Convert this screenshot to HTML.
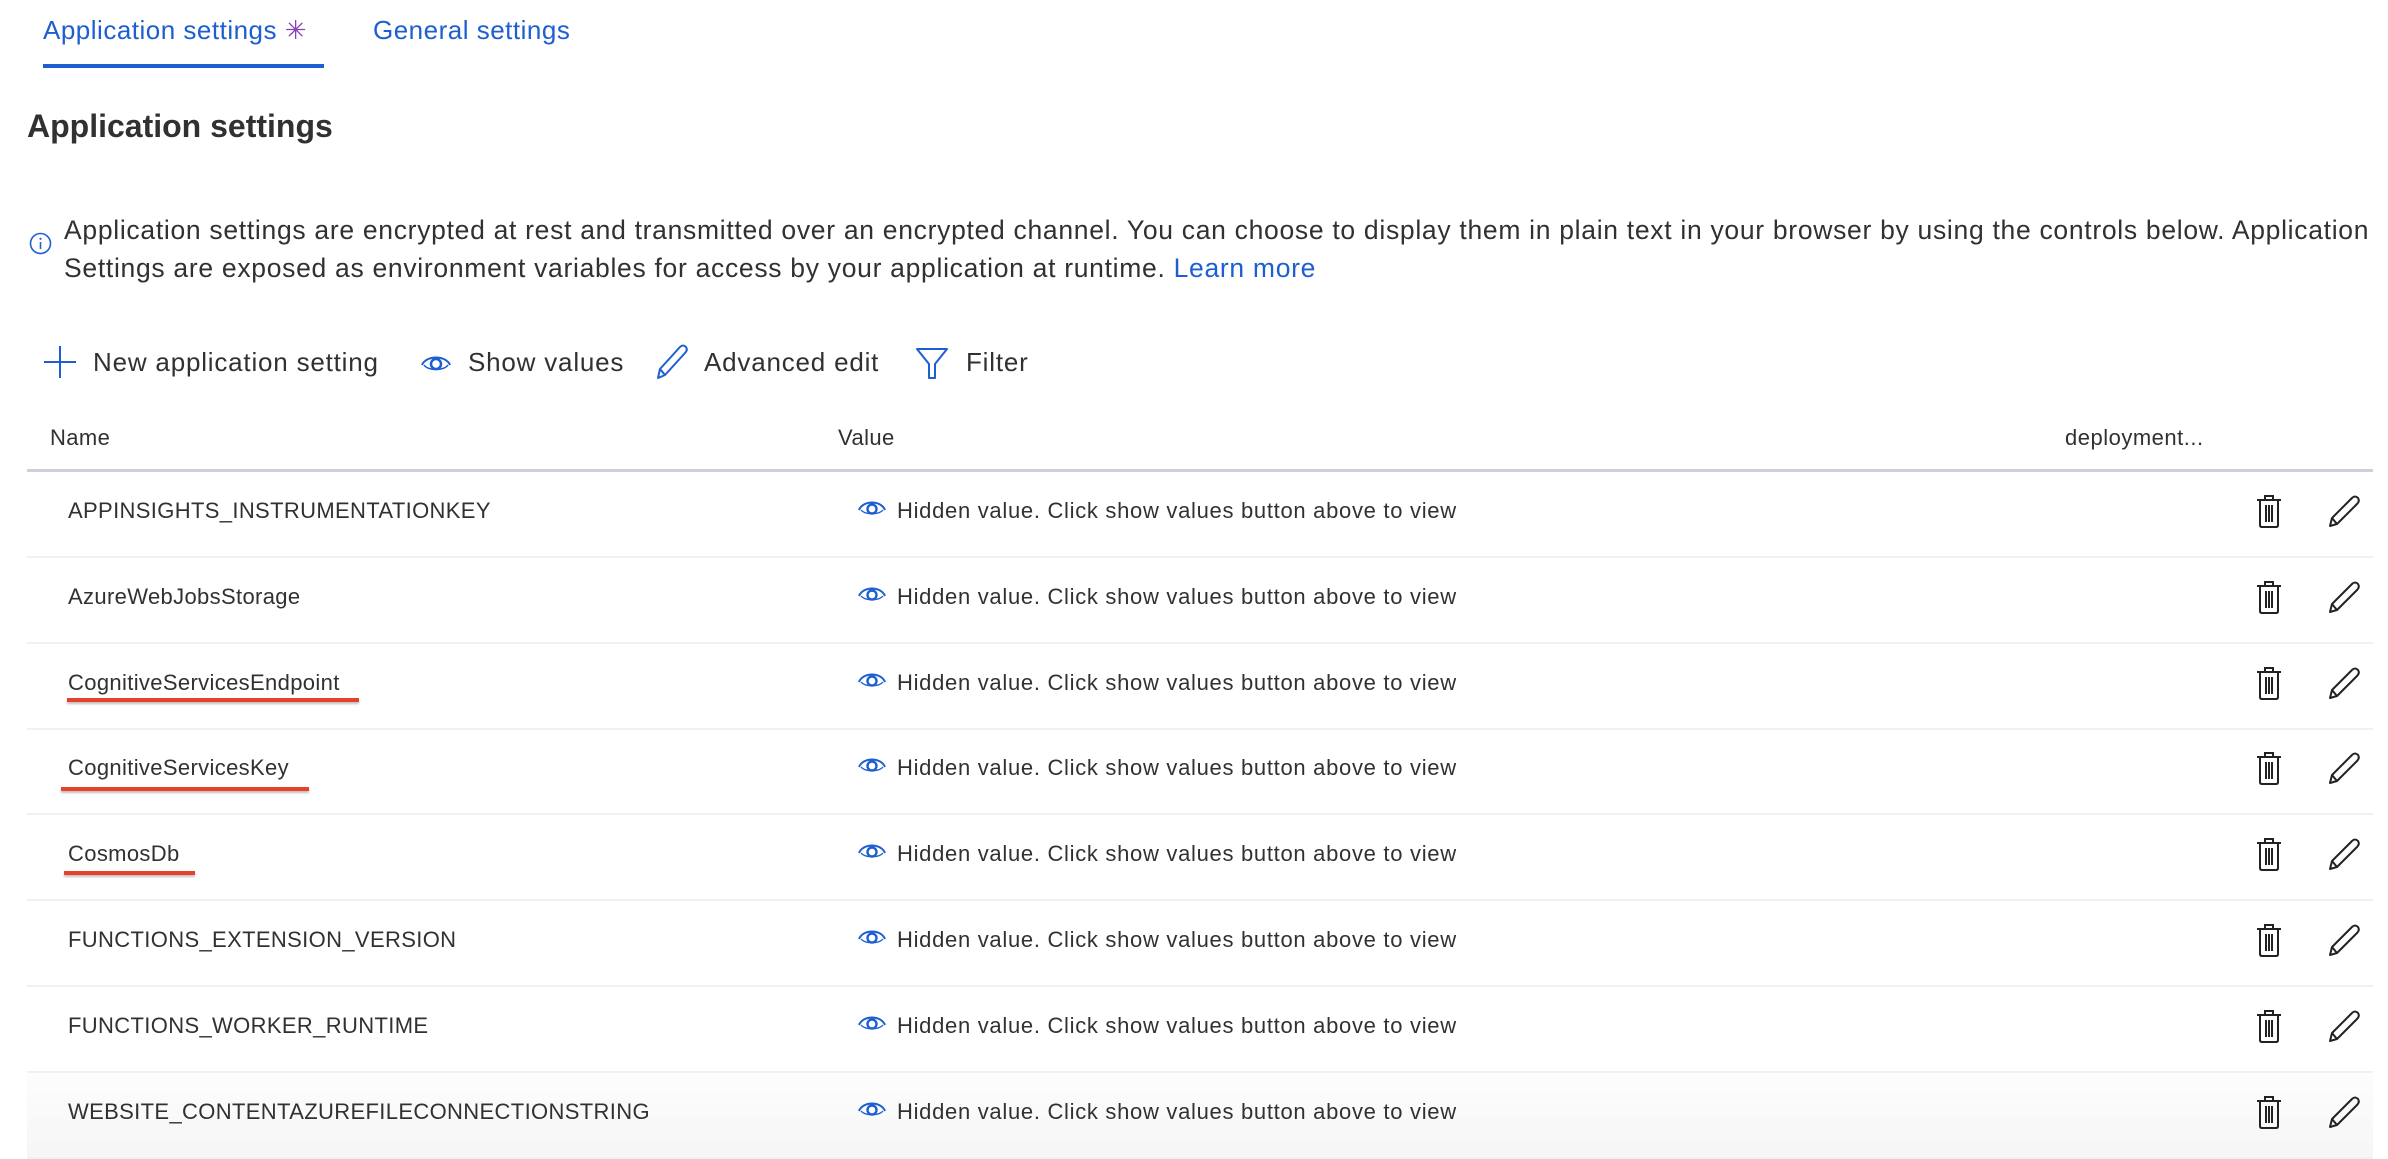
<!DOCTYPE html>
<html><head><meta charset="utf-8"><style>
*{margin:0;padding:0;box-sizing:border-box}
body{width:2388px;height:1122px;overflow:hidden;background:#fff;font-family:"Liberation Sans",sans-serif;color:#323130;position:relative}
.a{position:absolute;white-space:nowrap}
.blue{color:#1d5fd1}
.tb{font-size:26px;letter-spacing:0.8px}
.row{position:absolute;left:27px;width:2346px;height:86px;border-bottom:2px solid #f0f0f0}
.row .n{position:absolute;left:41px;top:26px;font-size:22px;color:#323130;letter-spacing:0.35px}
.row .v{position:absolute;left:870px;top:26px;font-size:22px;color:#323130;letter-spacing:0.7px}
.row svg.eye{position:absolute;left:830px;top:26px}
.row svg.tr{position:absolute;left:2228px;top:22px}
.row svg.pe{position:absolute;left:2300px;top:22px}
.red{position:absolute;height:4px;background:#e8412b;box-shadow:0 2px 2px rgba(0,0,0,.25)}
</style></head><body>
<div class="a blue" style="left:43px;top:15px;font-size:26px;letter-spacing:0.5px">Application settings <span style="color:#8a3fb5">✳</span></div>
<div class="a blue" style="left:373px;top:15px;font-size:26px;letter-spacing:0.5px">General settings</div>
<div class="a" style="left:43px;top:64px;width:281px;height:4px;background:#1d5fd1"></div>
<div class="a" style="left:27px;top:108px;font-size:32px;font-weight:bold;color:#323130">Application settings</div>
<svg class="a" style="left:29px;top:232px" width="23" height="23" viewBox="0 0 23 23"><circle cx="11.5" cy="11.5" r="10" fill="none" stroke="#1d5fd1" stroke-width="1.6"/><line x1="11.5" y1="10" x2="11.5" y2="17" stroke="#1d5fd1" stroke-width="1.6"/><circle cx="11.5" cy="6.8" r="1.1" fill="#1d5fd1"/></svg>
<div class="a" style="left:64px;top:211px;font-size:26.5px;line-height:38px;color:#323130;letter-spacing:0.7px">Application settings are encrypted at rest and transmitted over an encrypted channel. You can choose to display them in plain text in your browser by using the controls below. Application<br>Settings are exposed as environment variables for access by your application at runtime. <span class="blue">Learn more</span></div>
<svg class="a" style="left:43px;top:345px" width="34" height="34"><path d="M17 1V33M1 17H33" stroke="#1d5fd1" stroke-width="2"/></svg>
<div class="a tb" style="left:93px;top:347px">New application setting</div>
<svg class="a" style="left:420px;top:352px" width="32" height="22" viewBox="0 0 32 22"><path d="M2 13C6 3 26 3 30 13" fill="none" stroke="#1d5fd1" stroke-width="2"/><path d="M4 13C8 19 24 19 28 13" fill="none" stroke="#1d5fd1" stroke-width="1.5"/><circle cx="16" cy="12" r="5" fill="none" stroke="#1d5fd1" stroke-width="2.5"/></svg>
<div class="a tb" style="left:468px;top:347px">Show values</div>
<svg class="a" style="left:655px;top:344px" width="34" height="36" viewBox="0 0 34 36"><path d="M3 34L5 25L25 3Q28 0 31 3Q33 6 30 9L10 31Z M5 25L10 31" fill="none" stroke="#1d5fd1" stroke-width="2" stroke-linejoin="round"/></svg>
<div class="a tb" style="left:704px;top:347px">Advanced edit</div>
<svg class="a" style="left:915px;top:346px" width="34" height="34" viewBox="0 0 34 34"><path d="M2 3H32L20 18V32H14V18Z" fill="none" stroke="#1d5fd1" stroke-width="2" stroke-linejoin="round"/></svg>
<div class="a tb" style="left:966px;top:347px">Filter</div>
<div class="a" style="left:50px;top:425px;font-size:22px;letter-spacing:0.4px">Name</div>
<div class="a" style="left:838px;top:425px;font-size:22px;letter-spacing:0.4px">Value</div>
<div class="a" style="left:2065px;top:425px;font-size:22px;letter-spacing:0.5px">deployment...</div>
<div class="a" style="left:27px;top:469px;width:2346px;height:3px;background:#cdd0da"></div>

<div id="rows"></div>
<script>
var names=["APPINSIGHTS_INSTRUMENTATIONKEY","AzureWebJobsStorage","CognitiveServicesEndpoint","CognitiveServicesKey","CosmosDb","FUNCTIONS_EXTENSION_VERSION","FUNCTIONS_WORKER_RUNTIME","WEBSITE_CONTENTAZUREFILECONNECTIONSTRING"];
var h="";
names.forEach(function(n,i){
var top=472+i*85.8;
var bg=i==7?"background:linear-gradient(#fdfdfd,#f6f6f6);":"";
h+='<div class="row" style="top:'+top+'px;'+bg+'"><div class="n">'+n+'</div>'+
'<svg class="eye" width="30" height="22" viewBox="0 0 30 22"><path d="M2 12C6 2 24 2 28 12" fill="none" stroke="#1d5fd1" stroke-width="2"/><path d="M4 12C8 17 22 17 26 12" fill="none" stroke="#1d5fd1" stroke-width="1.4"/><circle cx="15" cy="11" r="4.5" fill="none" stroke="#1d5fd1" stroke-width="2.4"/></svg>'+
'<div class="v">Hidden value. Click show values button above to view</div>'+
'<svg class="tr" width="28" height="34" viewBox="0 0 28 34"><path d="M2 6H26M10 6V2H18V6M5 6V31Q5 33 7 33H21Q23 33 23 31V6M11 11V28M14 11V28M17 11V28" fill="none" stroke="#222" stroke-width="2"/></svg>'+
'<svg class="pe" width="34" height="34" viewBox="0 0 34 34"><path d="M3 32L5 24L25 4Q28 1 31 4Q33 7 30 10L10 30Z M5 24L10 30" fill="none" stroke="#222" stroke-width="2" stroke-linejoin="round"/></svg></div>';
});
document.getElementById("rows").innerHTML=h;
</script>
<div class="red" style="left:67px;top:698px;width:292px"></div>
<div class="red" style="left:61px;top:787px;width:248px"></div>
<div class="red" style="left:64px;top:871px;width:131px"></div>
</body></html>
